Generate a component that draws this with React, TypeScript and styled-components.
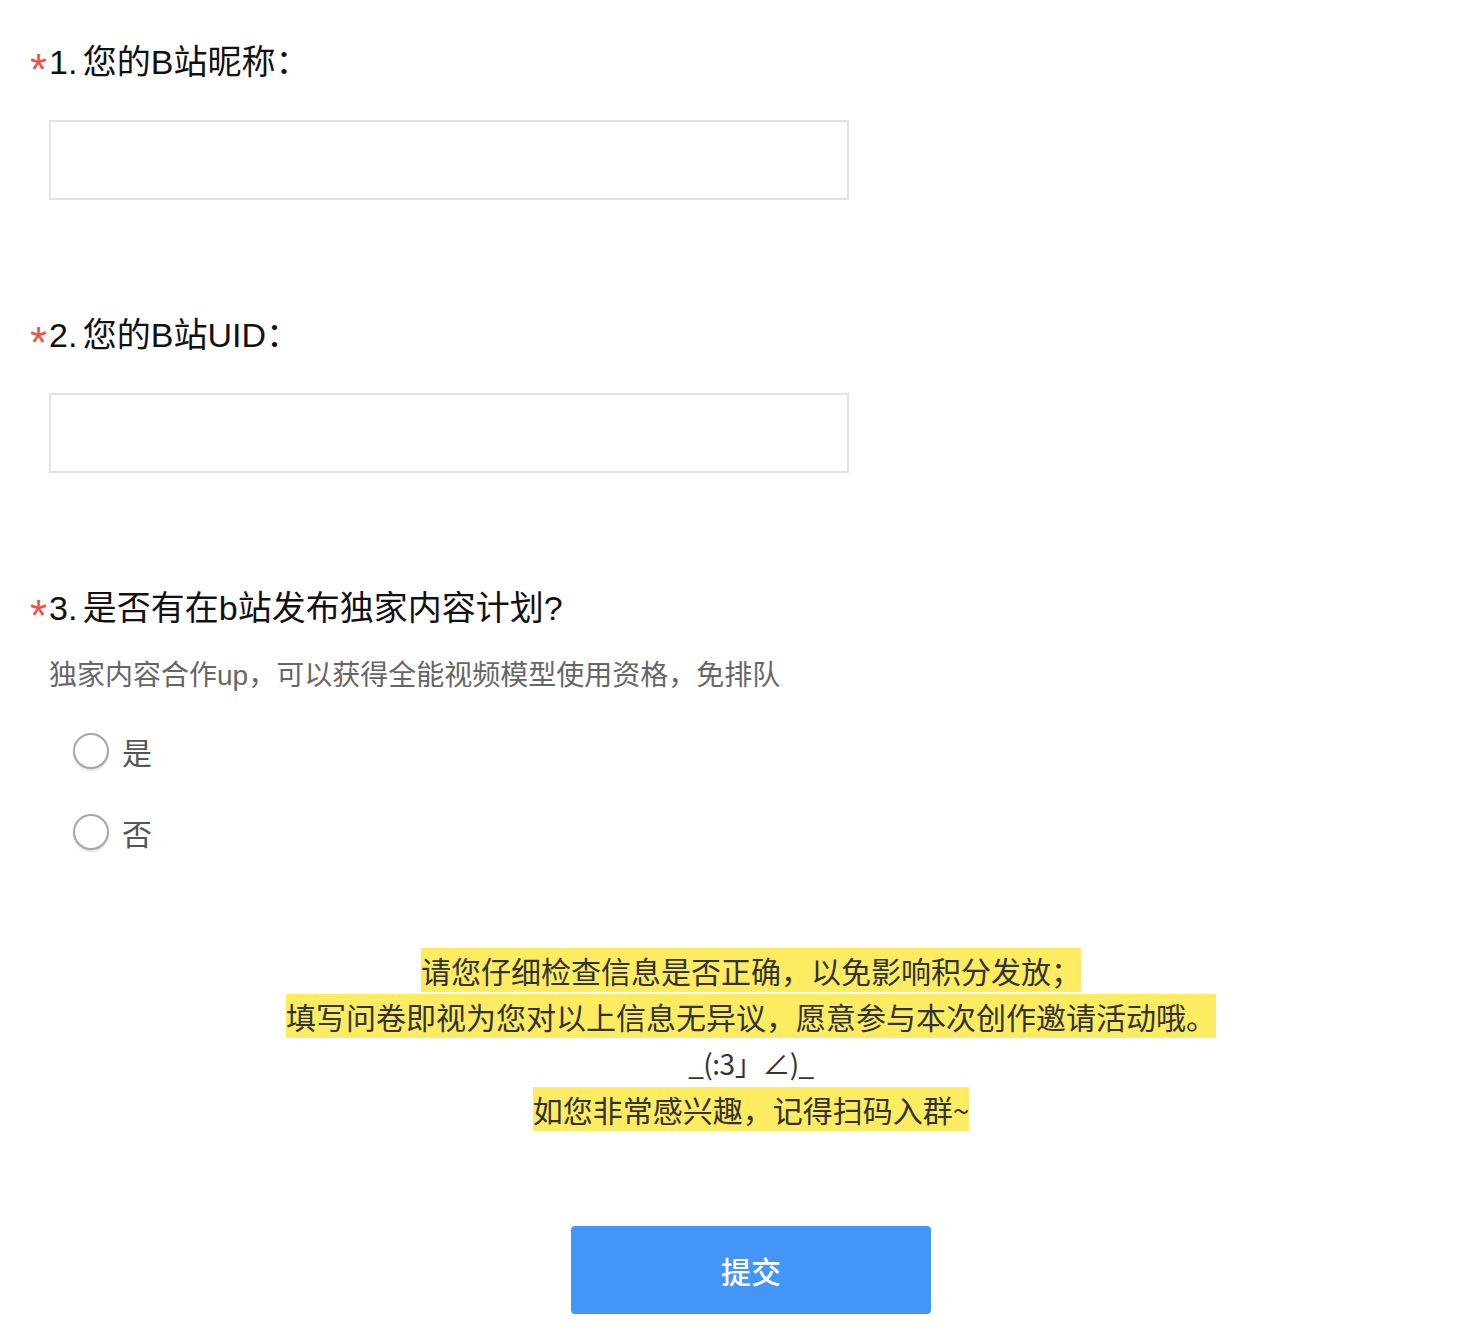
import React from "react";
import styled, { createGlobalStyle } from "styled-components";

const GlobalStyle = createGlobalStyle`
  html, body {
    margin: 0;
    padding: 0;
    background: #ffffff;
  }
  body {
    font-family: "Liberation Sans", "Noto Sans CJK SC", sans-serif;
    color: #111111;
  }
`;

const Page = styled.div`
  width: 1460px;
  padding: 38px 0 22px 0;
  box-sizing: border-box;
`;

const Question = styled.section<{ $gap?: number }>`
  padding-left: 30px;
  margin-bottom: ${(p) => p.$gap ?? 0}px;
`;

const TitleRow = styled.div`
  display: flex;
  align-items: center;
  height: 48px;
`;

const Star = styled.span`
  color: #f0504b;
  font-family: "Liberation Sans", sans-serif;
  font-size: 44px;
  line-height: 1;
  width: 19px;
  padding-top: 16px;
  box-sizing: content-box;
  overflow: visible;
  white-space: nowrap;
`;

const Title = styled.h2`
  margin: 0;
  font-weight: 400;
  font-size: 34px;
  line-height: 48px;
  word-spacing: -4px;
  color: #111111;
  font-family: "Liberation Sans", "Noto Sans CJK SC", sans-serif;
`;

const TextInput = styled.input`
  display: block;
  margin: 34px 0 0 19px;
  width: 800px;
  height: 80px;
  box-sizing: border-box;
  border: 2px solid #e2e2e2;
  border-radius: 0;
  outline: none;
  padding: 0 16px;
  font-size: 28px;
  background: #fff;
`;

const Description = styled.p`
  margin: 24px 0 0 19px;
  font-size: 28px;
  line-height: 40px;
  color: #666666;
  font-family: "Liberation Sans", "Noto Sans CJK SC", sans-serif;
`;

const Options = styled.div`
  display: flex;
  flex-direction: column;
  gap: 31px;
  margin: 30px 0 0 43px;
`;

const Option = styled.label`
  display: flex;
  align-items: center;
  gap: 13px;
  height: 50px;
  cursor: pointer;
`;

const RadioCircle = styled.span`
  width: 36px;
  height: 36px;
  box-sizing: border-box;
  border-radius: 50%;
  border: 2px solid #a6a6a6;
  background: #ffffff;
  box-shadow: 0 2px 2px rgba(0, 0, 0, 0.12);
`;

const OptionLabel = styled.span`
  font-size: 30px;
  line-height: 50px;
  color: #555555;
  font-family: "Noto Sans CJK SC", sans-serif;
`;

const Notice = styled.div`
  margin-top: 90px;
  padding-left: 42px;
  text-align: center;
  font-family: "Noto Sans CJK SC", sans-serif;
  font-size: 30px;
  line-height: 46px;
  color: #333333;
`;

const Mark = styled.span`
  background: #fdec62;
`;

const Kaomoji = styled.span`
  color: #333333;
  font-size: 28px;
  letter-spacing: -0.5px;
`;

const ButtonWrap = styled.div`
  display: flex;
  justify-content: center;
  padding-left: 42px;
  margin-top: 94px;
`;

const Submit = styled.button`
  width: 360px;
  height: 88px;
  border: none;
  border-radius: 4px;
  background: #4395f7;
  color: #ffffff;
  font-family: "Noto Sans CJK SC", sans-serif;
  font-size: 30px;
  font-weight: 500;
  cursor: pointer;
`;

export default function App() {
  return (
    <>
      <GlobalStyle />
      <Page>
        <Question $gap={111}>
          <TitleRow>
            <Star>*</Star>
            <Title>1. 您的B站昵称：</Title>
          </TitleRow>
          <TextInput type="text" />
        </Question>
        <Question $gap={111}>
          <TitleRow>
            <Star>*</Star>
            <Title>2. 您的B站UID：</Title>
          </TitleRow>
          <TextInput type="text" />
        </Question>
        <Question>
          <TitleRow>
            <Star>*</Star>
            <Title>3. 是否有在b站发布独家内容计划?</Title>
          </TitleRow>
          <Description>独家内容合作up，可以获得全能视频模型使用资格，免排队</Description>
          <Options>
            <Option>
              <RadioCircle />
              <OptionLabel>是</OptionLabel>
            </Option>
            <Option>
              <RadioCircle />
              <OptionLabel>否</OptionLabel>
            </Option>
          </Options>
        </Question>
        <Notice>
          <Mark>请您仔细检查信息是否正确，以免影响积分发放；</Mark>
          <br />
          <Mark>填写问卷即视为您对以上信息无异议，愿意参与本次创作邀请活动哦。</Mark>
          <br />
          <Kaomoji>_(:3」∠)_</Kaomoji>
          <br />
          <Mark>如您非常感兴趣，记得扫码入群~</Mark>
        </Notice>
        <ButtonWrap>
          <Submit type="button">提交</Submit>
        </ButtonWrap>
      </Page>
    </>
  );
}
